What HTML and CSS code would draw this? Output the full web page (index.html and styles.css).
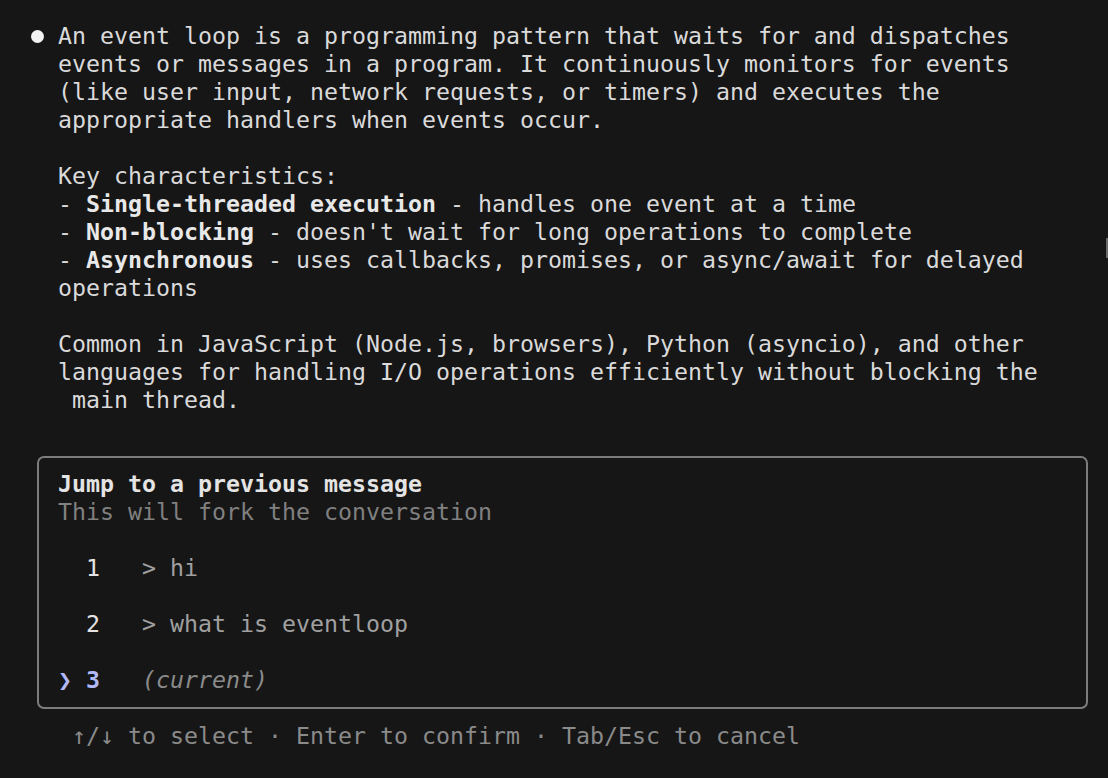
FILE: index.html
```html
<!DOCTYPE html>
<html>
<head>
<meta charset="utf-8">
<link rel="stylesheet" href="styles.css">
</head>
<body>
<div class="term">
  <div class="msg">
    <div class="bullet-col"><span class="bullet"></span></div>
    <div class="msg-body">
      <div class="ln">An event loop is a programming pattern that waits for and dispatches</div>
      <div class="ln">events or messages in a program. It continuously monitors for events</div>
      <div class="ln">(like user input, network requests, or timers) and executes the</div>
      <div class="ln">appropriate handlers when events occur.</div>
      <div class="ln"> </div>
      <div class="ln">Key characteristics:</div>
      <div class="ln">- <b>Single-threaded execution</b> - handles one event at a time</div>
      <div class="ln">- <b>Non-blocking</b> - doesn't wait for long operations to complete</div>
      <div class="ln">- <b>Asynchronous</b> - uses callbacks, promises, or async/await for delayed</div>
      <div class="ln">operations</div>
      <div class="ln"> </div>
      <div class="ln">Common in JavaScript (Node.js, browsers), Python (asyncio), and other</div>
      <div class="ln">languages for handling I/O operations efficiently without blocking the</div>
      <div class="ln"> main thread.</div>
    </div>
  </div>

  <div class="picker">
    <div class="ln title">Jump to a previous message</div>
    <div class="ln sub">This will fork the conversation</div>
    <div class="ln"> </div>
    <div class="ln item"><span class="ptr"> </span> <span class="num">1</span>   <span class="txt">&gt; hi</span></div>
    <div class="ln"> </div>
    <div class="ln item"><span class="ptr"> </span> <span class="num">2</span>   <span class="txt">&gt; what is eventloop</span></div>
    <div class="ln"> </div>
    <div class="ln item sel"><span class="ptr">❯</span> <span class="num">3</span>   <span class="cur">(current)</span></div>
  </div>

  <div class="ln footer">↑/↓ to select · Enter to confirm · Tab/Esc to cancel</div>
</div>
<div class="scroll"></div>
</body>
</html>
```

FILE: styles.css
```css
html, body {
  margin: 0;
  padding: 0;
  background: #161616;
}
body {
  font-family: "DejaVu Sans Mono", "Liberation Mono", monospace;
  font-size: 23.25px;
  letter-spacing: 0;
  color: #dadada;
}
.term {
  padding: 22px 0 0 30px;
}
.ln {
  height: 28px;
  line-height: 28px;
  white-space: pre;
}
.ln b {
  font-weight: bold;
  color: #e8e8e8;
}
.msg {
  display: flex;
}
.bullet-col {
  width: 28px;
  flex: none;
  position: relative;
}
.bullet {
  position: absolute;
  left: 1px;
  top: 8px;
  width: 13px;
  height: 13px;
  border-radius: 50%;
  background: #f2f2f2;
}
.picker {
  margin: 42px 0 0 7px;
  width: 1051px;
  box-sizing: border-box;
  border: 2px solid #7c7c7c;
  border-radius: 7px;
  padding: 12px 0 13px 19px;
}
.title {
  font-weight: bold;
  color: #e4e4e4;
}
.sub {
  color: #808080;
}
.item .num {
  color: #e4e4e4;
}
.item .txt {
  color: #a0a0a0;
}
.sel .ptr, .sel .num {
  color: #b1b9f9;
  font-weight: bold;
}
.cur {
  color: #8a8a8a;
  font-style: italic;
}
.footer {
  margin: 13px 0 0 42px;
  color: #8a8a8a;
}
.scroll {
  position: fixed;
  right: 0;
  top: 238px;
  width: 2px;
  height: 20px;
  background: #6a6a6a;
}
```
